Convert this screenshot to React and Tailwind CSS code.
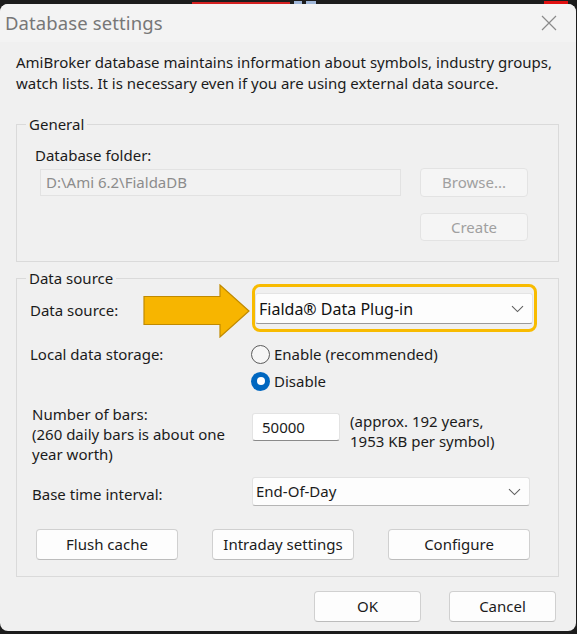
import React from 'react'

const font = { fontFamily: '"Noto Sans", "Liberation Sans", sans-serif' }

const Chevron = () => (
  <svg width="13" height="8" viewBox="0 0 13 8" fill="none" className="shrink-0">
    <path d="M1 1.2 L6.5 6.6 L12 1.2" stroke="#606060" strokeWidth="1.1" />
  </svg>
)

const Button = ({ children, disabled, className = '' }) => (
  <button
    className={`rounded-[4px] border text-[15px] leading-none ${
      disabled
        ? 'bg-[#f5f5f5] border-[#e3e3e3] text-[#a0a0a0]'
        : 'bg-[#fdfdfd] border-[#d0d0d0] border-b-[#bcbcbc] text-[#1b1b1b]'
    } ${className}`}
  >
    {children}
  </button>
)

const Radio = ({ checked, label }) => (
  <div className="flex items-center h-[20px]">
    {checked ? (
      <span className="w-[19px] h-[19px] rounded-full bg-[#0067c0] flex items-center justify-center">
        <span className="w-[8px] h-[8px] rounded-full bg-white" />
      </span>
    ) : (
      <span className="w-[19px] h-[19px] rounded-full border border-[#5c5c5c] bg-[#f6f6f6]" />
    )}
    <span className="ml-[4px]">{label}</span>
  </div>
)

export default function App() {
  return (
    <div className="w-[577px] h-[634px] bg-[#1c1c1c] overflow-hidden text-[#1b1b1b] text-[15px]" style={font}>
      {/* background strip above the dialog */}
      <div className="h-[4px] flex items-end">
        <div className="ml-[192px] w-[98px] h-[2px] bg-[#d42020]" />
        <div className="ml-[4px] w-[8px] h-[3px] bg-[#9fb6d8]" />
        <div className="ml-[4px] w-[10px] h-[3px] bg-[#9fb6d8]" />
        <div className="ml-[228px] w-[24px] h-[3px] bg-[#e01010]" />
      </div>

      <div className="w-[576px] h-[627px] bg-[#f0f0f0] rounded-[8px] overflow-hidden">
        {/* title bar */}
        <div className="h-[38px] bg-[#f3f3f3] flex items-center justify-between pl-[5px] pr-[19px]">
          <span className="text-[18.5px] text-[#777777] tracking-[0.1px]">Database settings</span>
          <svg width="16" height="16" viewBox="0 0 16 16" fill="none">
            <path d="M1 1 L15 15 M15 1 L1 15" stroke="#8a8a8a" strokeWidth="1.2" />
          </svg>
        </div>

        <p className="mt-[10px] px-[16px] leading-[21px]">
          AmiBroker database maintains information about symbols, industry groups,
          <br />
          watch lists. It is necessary even if you are using external data source.
        </p>

        {/* General */}
        <fieldset className="mt-[20px] ml-[16px] w-[543px] border border-[#dadada] pl-[18px] pb-[20px]">
          <legend className="-ml-[9px] px-[3px] leading-[20px]">General</legend>
          <div className="mt-[11px] leading-[20px]">Database folder:</div>
          <div className="mt-[3px] ml-[5px] flex items-center">
            <div className="w-[361px] h-[27px] border border-[#e2e2e2] bg-[#f2f2f2] text-[#8c8c8c] flex items-center pl-[5px]">
              D:\Ami 6.2\FialdaDB
            </div>
            <Button disabled className="ml-[19px] w-[108px] h-[29px]">Browse...</Button>
          </div>
          <div className="mt-[16px] ml-[385px]">
            <Button disabled className="w-[108px] h-[28px]">Create</Button>
          </div>
        </fieldset>

        {/* Data source */}
        <fieldset className="mt-[6px] ml-[16px] w-[543px] border border-[#dadada] pl-[13px] pb-[16px]">
          <legend className="-ml-[4px] px-[3px] leading-[20px]">Data source</legend>

          <div className="-mt-[4px] flex items-center relative">
            <div className="w-[222px] pt-[5px]">Data source:</div>
            <svg className="absolute left-[113px] top-[0px]" width="108" height="54" viewBox="0 0 108 54">
              <polygon
                points="1,12.5 77,12.5 77,1 106,27 77,53 77,40.5 1,40.5"
                fill="#f7b500"
                stroke="#c08a00"
                strokeWidth="1.2"
              />
            </svg>
            <div className="w-[285px] h-[48px] rounded-[8px] border-[3px] border-[#f8bb00] pt-[6px] pr-[1px]">
              <div className="h-[31px] bg-[#fdfdfd] border border-[#e4e4e4] border-b-[#9a9a9a] rounded-[3px] flex items-center justify-between pl-[3px] pr-[8px] text-[16px] text-[#111]">
                <span>Fialda® Data Plug-in</span>
                <Chevron />
              </div>
            </div>
          </div>

          <div className="mt-[12px] flex">
            <div className="w-[221px] leading-[20px]">Local data storage:</div>
            <div className="flex flex-col gap-[7px]">
              <Radio label="Enable (recommended)" />
              <Radio checked label="Disable" />
            </div>
          </div>

          <div className="mt-[13px] flex">
            <div className="w-[220px] ml-[2px] leading-[20px]">
              Number of bars:
              <br />
              (260 daily bars is about one
              <br />
              year worth)
            </div>
            <div className="mt-[9px] w-[88px] h-[28px] bg-white border border-[#e3e3e3] border-b-[#8a8a8a] rounded-[3px] flex items-center pl-[9px]">
              50000
            </div>
            <div className="mt-[7px] ml-[10px] leading-[20px]">
              (approx. 192 years,
              <br />
              1953 KB per symbol)
            </div>
          </div>

          <div className="mt-[13px] flex items-center">
            <div className="w-[220px] ml-[2px] pt-[5px]">Base time interval:</div>
            <div className="w-[278px] h-[29px] bg-[#fdfdfd] border border-[#e2e2e2] border-b-[#b5b5b5] rounded-[3px] flex items-center justify-between pl-[3px] pr-[8px]">
              <span>End-Of-Day</span>
              <Chevron />
            </div>
          </div>

          <div className="mt-[23px] ml-[6px] flex gap-[34px]">
            <Button className="w-[142px] h-[31px]">Flush cache</Button>
            <Button className="w-[142px] h-[31px]">Intraday settings</Button>
            <Button className="w-[142px] h-[31px]">Configure</Button>
          </div>
        </fieldset>

        <div className="mt-[14px] pr-[20px] flex justify-end gap-[28px]">
          <Button className="w-[107px] h-[31px]">OK</Button>
          <Button className="w-[107px] h-[31px]">Cancel</Button>
        </div>
      </div>
    </div>
  )
}
